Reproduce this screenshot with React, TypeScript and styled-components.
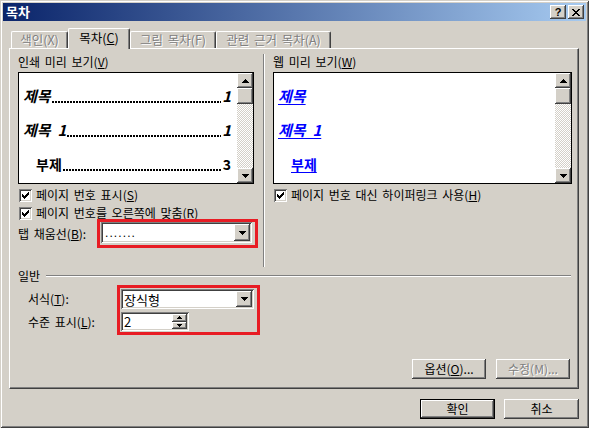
import React from 'react';
import styled, { createGlobalStyle, css } from 'styled-components';

const FACE = '#D4D0C8';
const SHADOW = '#808080';
const DARK = '#404040';
const RED = '#E81C24';
const FONT = `"Noto Sans CJK KR", "Noto Sans", sans-serif`;

const Global = createGlobalStyle`
  html, body { margin: 0; padding: 0; background: ${FACE}; }
  body { font-family: ${FONT}; font-size: 12px; color: #000; }
  * { box-sizing: border-box; }
  u { text-underline-offset: 1px; }
`;

const raised = css`
  box-shadow: inset -1px -1px ${DARK}, inset 1px 1px #fff, inset -2px -2px ${SHADOW}, inset 2px 2px ${FACE};
`;
const sunken = css`
  box-shadow: inset 1px 1px ${SHADOW}, inset -1px -1px #fff, inset 2px 2px ${DARK}, inset -2px -2px ${FACE};
`;

const Window = styled.div`
  width: 589px;
  height: 428px;
  background: ${FACE};
  box-shadow: inset 1px 1px ${FACE}, inset -1px -1px ${DARK}, inset 2px 2px #fff, inset -2px -2px ${SHADOW};
  padding: 3px;
  display: flex;
  flex-direction: column;
`;

const TitleBar = styled.div`
  height: 18px;
  flex: none;
  display: flex;
  align-items: center;
  padding: 0 2px 0 3px;
  background: linear-gradient(to right, #0a246a, #a6caf0);
`;

const TitleText = styled.div`
  flex: 1;
  color: #fff;
  font-weight: bold;
  font-size: 13px;
  line-height: 18px;
`;

const CaptionButton = styled.div`
  width: 16px;
  height: 14px;
  margin-left: 2px;
  background: ${FACE};
  ${raised};
  display: flex;
  align-items: center;
  justify-content: center;
  font-family: "Liberation Sans", Arial, sans-serif;
  font-weight: bold;
  font-size: 11px;
  line-height: 14px;
`;

const Body = styled.div`
  flex: 1;
  display: flex;
  flex-direction: column;
  padding: 7px 7px 0 6px;
`;

const TabStrip = styled.div`
  height: 21px;
  margin-bottom: -1px;
  display: flex;
  align-items: flex-end;
  padding-left: 2px;
  position: relative;
  z-index: 1;
`;

const Tab = styled.div<{ $active?: boolean; $w: number }>`
  width: ${(p) => p.$w}px;
  height: ${(p) => (p.$active ? 21 : 17)}px;
  margin-bottom: ${(p) => (p.$active ? 0 : 1)}px;
  background: ${FACE};
  border-left: 1px solid #fff;
  border-top: 1px solid #fff;
  border-right: 1px solid ${DARK};
  box-shadow: inset -1px 0 ${SHADOW};
  border-radius: 2px 2px 0 0;
  display: flex;
  align-items: center;
  justify-content: center;
  font-size: 12.5px;
  line-height: 14px;
  padding-bottom: ${(p) => (p.$active ? 2 : 0)}px;
  word-spacing: 2px;
  white-space: nowrap;
  color: ${(p) => (p.$active ? '#000' : SHADOW)};
  text-shadow: ${(p) => (p.$active ? 'none' : '1px 1px #fff')};
`;

const Panel = styled.div`
  height: 341px;
  flex: none;
  border-left: 1px solid #fff;
  border-top: 1px solid #fff;
  border-right: 1px solid ${DARK};
  border-bottom: 1px solid ${DARK};
  box-shadow: inset -1px -1px ${SHADOW};
  padding: 5px 6px 0 8px;
  display: flex;
  flex-direction: column;
`;

const Columns = styled.div`
  height: 213px;
  flex: none;
  display: flex;
`;

const Column = styled.div<{ $w?: number }>`
  ${(p) => (p.$w ? `width: ${p.$w}px; flex: none;` : 'flex: 1;')}
  display: flex;
  flex-direction: column;
`;

const VSep = styled.div`
  width: 2px;
  margin: 0 8px 0 9px;
  border-left: 1px solid ${SHADOW};
  border-right: 1px solid #fff;
`;

const SectionLabel = styled.div`
  height: 16px;
  line-height: 16px;
  margin-bottom: 2px;
  word-spacing: 2px;
  white-space: nowrap;
`;

const PreviewBox = styled.div`
  height: 112px;
  flex: none;
  border: 1px solid #000;
  display: flex;
`;

const PreviewContent = styled.div`
  flex: 1;
  background: #fff;
  padding: 13px 6px 0 4px;
  overflow: hidden;
`;

const TocRow = styled.div<{ $size: number; $italic?: boolean; $indent?: number; $link?: boolean }>`
  display: flex;
  align-items: flex-end;
  height: 20px;
  line-height: 20px;
  margin-bottom: 14px;
  padding-left: ${(p) => p.$indent ?? 0}px;
  font-size: ${(p) => p.$size}px;
  font-weight: bold;
  font-style: ${(p) => (p.$italic ? 'italic' : 'normal')};
  white-space: pre;
  color: ${(p) => (p.$link ? '#0000FF' : '#000')};
  text-decoration: ${(p) => (p.$link ? 'underline' : 'none')};
  text-underline-offset: 2px;
`;

const Leader = styled.span`
  flex: 1;
  height: 2px;
  margin: 0 1px 3px 1px;
  background-image: linear-gradient(to right, #000 0 2px, transparent 2px 100%);
  background-size: 3px 2px;
  background-repeat: repeat-x;
`;

const ScrollBar = styled.div`
  width: 16px;
  flex: none;
  display: flex;
  flex-direction: column;
  background-color: #fff;
  background-image: conic-gradient(${FACE} 25%, #fff 0 50%, ${FACE} 0 75%, #fff 0);
  background-size: 2px 2px;
`;

const ScrollPart = styled.div<{ $h: number; $bottom?: boolean }>`
  height: ${(p) => p.$h}px;
  flex: none;
  margin-top: ${(p) => (p.$bottom ? 'auto' : '0')};
  background: ${FACE};
  ${raised};
  display: flex;
  align-items: center;
  justify-content: center;
`;

const CheckRow = styled.div<{ $mt?: number }>`
  display: flex;
  align-items: center;
  height: 18px;
  margin-top: ${(p) => p.$mt ?? 0}px;
  gap: 4px;
  word-spacing: 2px;
  white-space: nowrap;
  line-height: 14px;
`;

const CheckBox = styled.div`
  width: 13px;
  height: 13px;
  flex: none;
  margin-left: 1px;
  background: #fff;
  ${sunken};
  display: flex;
  align-items: center;
  justify-content: center;
`;

const LeaderRow = styled.div`
  display: flex;
  align-items: center;
  margin-top: -3px;
`;

const FieldLabel = styled.div<{ $w?: number; $h?: number }>`
  ${(p) => (p.$w ? `width: ${p.$w}px;` : '')}
  ${(p) => (p.$h ? `height: ${p.$h}px; line-height: ${p.$h}px;` : 'line-height: 16px;')}
  flex: none;
  word-spacing: 2px;
  white-space: nowrap;
`;

const RedBox = styled.div<{ $pad: string; $gap?: number }>`
  border: 3px solid ${RED};
  padding: ${(p) => p.$pad};
  display: flex;
  flex-direction: column;
  gap: ${(p) => p.$gap ?? 0}px;
`;

const Combo = styled.div<{ $w: number; $h: number }>`
  width: ${(p) => p.$w}px;
  height: ${(p) => p.$h}px;
  flex: none;
  background: #fff;
  ${sunken};
  padding: 2px;
  display: flex;
`;

const ComboText = styled.div<{ $size: number; $dots?: boolean }>`
  flex: 1;
  display: flex;
  align-items: center;
  padding-left: 1px;
  font-size: ${(p) => p.$size}px;
  line-height: 1;
  white-space: nowrap;
  ${(p) =>
    p.$dots
      ? `font-family: "Liberation Sans", Arial, sans-serif; letter-spacing: 1.1px; padding-left: 2px;`
      : ''}
`;

const DropButton = styled.div`
  width: 16px;
  flex: none;
  background: ${FACE};
  ${raised};
  display: flex;
  align-items: center;
  justify-content: center;
`;

const SpinButtons = styled.div`
  width: 15px;
  flex: none;
  display: flex;
  flex-direction: column;
`;

const SpinButton = styled.div`
  flex: 1;
  background: ${FACE};
  ${raised};
  display: flex;
  align-items: center;
  justify-content: center;
`;

const GroupHeader = styled.div`
  height: 16px;
  margin-top: 1px;
  display: flex;
  align-items: center;
  line-height: 16px;
`;

const GroupLine = styled.div`
  flex: 1;
  height: 2px;
  margin: -1px 1px 0 6px;
  border-top: 1px solid ${SHADOW};
  border-bottom: 1px solid #fff;
`;

const FormatRow = styled.div`
  display: flex;
  margin-top: 1px;
  padding-left: 10px;
`;

const FormatLabels = styled.div`
  width: 89px;
  flex: none;
  display: flex;
  flex-direction: column;
  padding-top: 4px;
  gap: 3px;
`;

const ButtonRow = styled.div<{ $mt: number; $gap: number; $pr?: number }>`
  display: flex;
  justify-content: flex-end;
  margin-top: ${(p) => p.$mt}px;
  gap: ${(p) => p.$gap}px;
  padding-right: ${(p) => p.$pr ?? 0}px;
`;

const PushButton = styled.div<{ $w: number; $default?: boolean; $disabled?: boolean }>`
  width: ${(p) => p.$w}px;
  height: 20px;
  background: ${FACE};
  ${(p) =>
    p.$default
      ? css`
          border: 1px solid #000;
          box-shadow: inset -1px -1px ${DARK}, inset 1px 1px #fff, inset -2px -2px ${SHADOW};
        `
      : raised};
  display: flex;
  align-items: center;
  justify-content: center;
  line-height: 14px;
  color: ${(p) => (p.$disabled ? SHADOW : '#000')};
  text-shadow: ${(p) => (p.$disabled ? '1px 1px #fff' : 'none')};
`;

const ARROW7 = 'M0 0H7V1H6V2H5V3H4V4H3V3H2V2H1V1H0Z';
const ARROW5 = 'M0 0H5V1H4V2H3V3H2V2H1V1H0Z';

const Arrow = ({ w = 7, up }: { w?: number; up?: boolean }) => {
  const h = w === 7 ? 4 : 3;
  return (
    <svg
      width={w}
      height={h}
      viewBox={`0 0 ${w} ${h}`}
      shapeRendering="crispEdges"
      style={up ? { transform: 'scaleY(-1)' } : undefined}
    >
      <path d={w === 7 ? ARROW7 : ARROW5} fill="#000" />
    </svg>
  );
};

const CheckMark = () => (
  <svg width="7" height="7" viewBox="0 0 7 7" shapeRendering="crispEdges">
    <path d="M6 0H7V3H6V4H5V5H4V6H3V7H2V6H1V5H0V2H1V3H2V4H3V3H4V2H5V1H6Z" fill="#000" />
  </svg>
);

const CloseGlyph = () => (
  <svg width="8" height="7" viewBox="0 0 8 7" shapeRendering="crispEdges">
    <path
      d="M0 0H2V1H3V2H5V1H6V0H8V1H7V2H6V3H5V4H6V5H7V6H8V7H6V6H5V5H3V6H2V7H0V6H1V5H2V4H3V3H2V2H1V1H0Z"
      fill="#000"
    />
  </svg>
);

const Scroll = () => (
  <ScrollBar>
    <ScrollPart $h={15}>
      <Arrow up />
    </ScrollPart>
    <ScrollPart $h={16} />
    <ScrollPart $h={15} $bottom>
      <Arrow />
    </ScrollPart>
  </ScrollBar>
);

const Check = ({ children, mt }: { children: React.ReactNode; mt?: number }) => (
  <CheckRow $mt={mt}>
    <CheckBox>
      <CheckMark />
    </CheckBox>
    <span>{children}</span>
  </CheckRow>
);

export default function App() {
  return (
    <>
      <Global />
      <Window>
        <TitleBar>
          <TitleText>목차</TitleText>
          <CaptionButton>?</CaptionButton>
          <CaptionButton>
            <CloseGlyph />
          </CaptionButton>
        </TitleBar>
        <Body>
          <TabStrip>
            <Tab $w={57}>색인(X)</Tab>
            <Tab $w={62} $active>
              <span>
                목차(<u>C</u>)
              </span>
            </Tab>
            <Tab $w={86}>그림 목차(F)</Tab>
            <Tab $w={115}>관련 근거 목차(A)</Tab>
          </TabStrip>
          <Panel>
            <Columns>
              <Column $w={236}>
                <SectionLabel>
                  인쇄 미리 보기(<u>V</u>)
                </SectionLabel>
                <PreviewBox>
                  <PreviewContent>
                    <TocRow $size={15} $italic>
                      <span>제목</span>
                      <Leader />
                      <span>1</span>
                    </TocRow>
                    <TocRow $size={15} $italic>
                      <span>{'제목  1'}</span>
                      <Leader />
                      <span>1</span>
                    </TocRow>
                    <TocRow $size={14} $indent={13}>
                      <span>부제</span>
                      <Leader />
                      <span>3</span>
                    </TocRow>
                  </PreviewContent>
                  <Scroll />
                </PreviewBox>
                <Check mt={2}>
                  페이지 번호 표시(<u>S</u>)
                </Check>
                <Check>
                  페이지 번호를 오른쪽에 맞춤(<u>R</u>)
                </Check>
                <LeaderRow>
                  <FieldLabel $w={79}>
                    탭 채움선(<u>B</u>):
                  </FieldLabel>
                  <RedBox $pad="0 3px 2px 1px">
                    <Combo $w={151} $h={21}>
                      <ComboText $size={12} $dots>
                        .......
                      </ComboText>
                      <DropButton>
                        <Arrow />
                      </DropButton>
                    </Combo>
                  </RedBox>
                </LeaderRow>
              </Column>
              <VSep />
              <Column>
                <SectionLabel>
                  웹 미리 보기(<u>W</u>)
                </SectionLabel>
                <PreviewBox>
                  <PreviewContent>
                    <TocRow $size={15} $italic $link>
                      <span>제목</span>
                    </TocRow>
                    <TocRow $size={15} $italic $link>
                      <span>{'제목  1'}</span>
                    </TocRow>
                    <TocRow $size={14} $indent={13} $link>
                      <span>부제</span>
                    </TocRow>
                  </PreviewContent>
                  <Scroll />
                </PreviewBox>
                <Check mt={2}>
                  페이지 번호 대신 하이퍼링크 사용(<u>H</u>)
                </Check>
              </Column>
            </Columns>
            <GroupHeader>
              <span>일반</span>
              <GroupLine />
            </GroupHeader>
            <FormatRow>
              <FormatLabels>
                <FieldLabel $h={20}>
                  서식(<u>T</u>):
                </FieldLabel>
                <FieldLabel $h={19}>
                  수준 표시(<u>L</u>):
                </FieldLabel>
              </FormatLabels>
              <RedBox $pad="1px 3px 1px 1px" $gap={3}>
                <Combo $w={133} $h={20}>
                  <ComboText $size={13}>장식형</ComboText>
                  <DropButton>
                    <Arrow />
                  </DropButton>
                </Combo>
                <Combo $w={68} $h={19}>
                  <ComboText $size={13}>2</ComboText>
                  <SpinButtons>
                    <SpinButton>
                      <Arrow w={5} up />
                    </SpinButton>
                    <SpinButton>
                      <Arrow w={5} />
                    </SpinButton>
                  </SpinButtons>
                </Combo>
              </RedBox>
            </FormatRow>
            <ButtonRow $mt={24} $gap={10} $pr={2}>
              <PushButton $w={74}>
                <span>
                  옵션(<u>O</u>)...
                </span>
              </PushButton>
              <PushButton $w={74} $disabled>
                수정(M)...
              </PushButton>
            </ButtonRow>
          </Panel>
          <ButtonRow $mt={10} $gap={9}>
            <PushButton $w={75} $default>
              확인
            </PushButton>
            <PushButton $w={75}>취소</PushButton>
          </ButtonRow>
        </Body>
      </Window>
    </>
  );
}
